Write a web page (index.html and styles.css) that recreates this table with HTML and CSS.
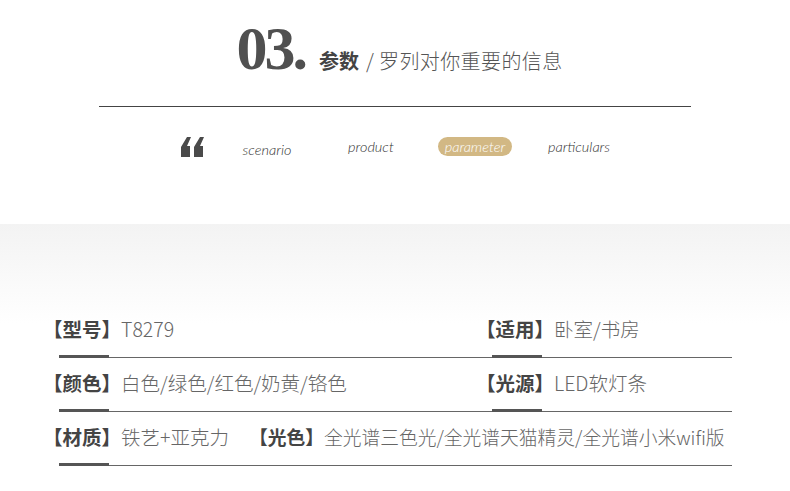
FILE: index.html
```html
<!DOCTYPE html>
<html lang="zh-CN">
<head>
    <meta charset="UTF-8">
    <meta name="viewport" content="width=device-width, initial-scale=1.0">
    <title>参数</title>
    <link rel="stylesheet" href="styles.css">
</head>
<body>
    <div class="head">
        <div class="title">
            <span class="num">03.</span>
            <span class="title-main">参数</span>
            <span class="title-sub">/ 罗列对你重要的信息</span>
        </div>
    </div>

    <div class="nav">
        <svg class="quote" width="23" height="20" viewBox="0 0 23 20">
            <polygon points="6,0 10,0 6,9 9,9 9,20 0,20 0,10" fill="#4a4a4a"/>
            <polygon points="19,0 23,0 19,9 22,9 22,20 13,20 13,10" fill="#4a4a4a"/>
        </svg>
        <div class="nav-item low">scenario</div>
        <div class="nav-item">product</div>
        <div class="nav-item"><span class="pill">parameter</span></div>
        <div class="nav-item">particulars</div>
    </div>

    <div class="specs">
        <div class="row">
            <div class="cell half"><b>【型号】</b>T8279</div>
            <div class="cell"><b>【适用】</b>卧室/书房</div>
        </div>
        <div class="line two"></div>

        <div class="row">
            <div class="cell half"><b>【颜色】</b>白色/绿色/红色/奶黄/铬色</div>
            <div class="cell"><b>【光源】</b>LED软灯条</div>
        </div>
        <div class="line two"></div>

        <div class="row">
            <div class="cell"><b>【材质】</b>铁艺+亚克力</div>
            <div class="cell extra"><b>【光色】</b>全光谱三色光/全光谱天猫精灵/全光谱小米wifi版</div>
        </div>
        <div class="line"></div>
    </div>
</body>
</html>
```

FILE: styles.css
```css
body {
    margin: 0;
    width: 790px;
    background: #fff;
    font-family: "Noto Sans CJK SC", "Noto Sans", sans-serif;
    color: #555;
}

.head {
    width: 592px;
    margin: 0 auto;
    border-bottom: 1px solid #444;
}

.title {
    display: flex;
    align-items: baseline;
    justify-content: center;
    padding: 18px 0 28px 9px;
    height: 60px;
}

.num {
    font-family: "Liberation Serif", serif;
    font-weight: bold;
    font-size: 62px;
    line-height: 60px;
    letter-spacing: -3px;
    color: #505050;
    margin-right: 14px;
}

.title-main {
    font-size: 20px;
    font-weight: bold;
    color: #444;
    margin-right: 7px;
}

.title-sub {
    font-size: 20px;
    font-weight: 300;
    letter-spacing: 0.4px;
    color: #555;
}

.nav {
    display: flex;
    align-items: center;
    padding-left: 181px;
    margin-top: 29px;
    height: 21px;
}

.quote {
    margin-right: 11px;
}

.nav-item {
    width: 104px;
    text-align: center;
    font-family: Lato, "Open Sans", sans-serif;
    font-style: italic;
    font-weight: 300;
    font-size: 14.5px;
    color: #333;
}

.nav-item.low {
    padding-top: 5px;
}

.pill {
    display: inline-block;
    background: #d2b884;
    color: #fff;
    border-radius: 10px;
    padding: 0 7px;
    height: 19px;
    line-height: 19px;
}

.specs {
    margin-top: 67px;
    padding: 92px 0 10px 0;
    background: linear-gradient(#f3f3f3, #fff 100px);
}

.row {
    display: flex;
    padding-left: 43px;
    height: 26px;
    line-height: 26px;
    font-size: 19.5px;
    font-weight: 300;
    color: #666;
}

.row b {
    font-weight: bold;
    color: #444;
}

.cell {
    white-space: nowrap;
}

.cell.half {
    width: 433px;
}

.cell.extra {
    margin-left: 20px;
    font-size: 18.75px;
}

.line {
    width: 673px;
    height: 3px;
    margin: 13px 0 12px 59px;
    background:
        linear-gradient(#555, #555) 0 0 / 50px 3px no-repeat,
        linear-gradient(#666, #666) 0 2px / 100% 1px no-repeat;
}

.line.two {
    background:
        linear-gradient(#555, #555) 0 0 / 50px 3px no-repeat,
        linear-gradient(#555, #555) 433px 0 / 50px 3px no-repeat,
        linear-gradient(#666, #666) 0 2px / 100% 1px no-repeat;
}
```
